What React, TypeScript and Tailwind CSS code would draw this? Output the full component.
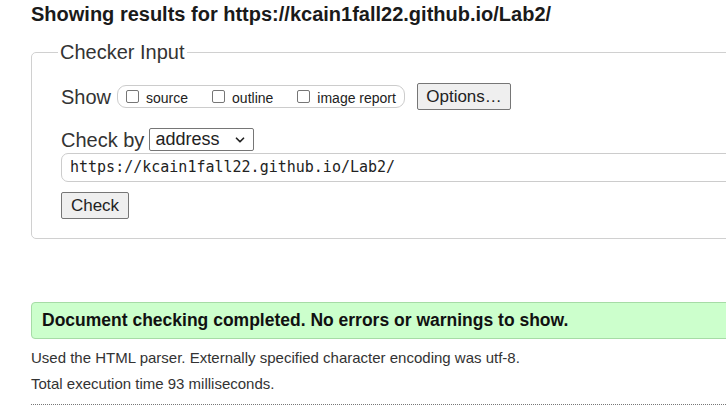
import { ChevronDown } from "lucide-react";

const sans = "font-['Arial','Liberation_Sans',sans-serif]";

function Box({ label }: { label: string }) {
  return (
    <label className="flex items-end leading-[16px]">
      <span className="mb-[3px] mr-[7px] inline-block h-[13px] w-[13px] rounded-[2px] border border-[#767676] bg-white" />
      <span className="text-[14px] text-[#222]">{label}</span>
    </label>
  );
}

export default function App() {
  return (
    <div className={`h-[405px] w-[726px] overflow-hidden bg-white text-[#222] ${sans}`}>
      <div className="w-[900px] pl-[31px]">
        <h2 className="pt-[2px] text-[20px] font-bold leading-[24px] text-[#1a1a1a]">
          Showing results for https://kcain1fall22.github.io/Lab2/
        </h2>
        <fieldset className="mt-[14px] h-[199px] rounded-[5px] border border-[#d0d0d0] px-[29px]">
          <legend className="-ml-[3px] px-[2px] text-[20px] leading-[24px] text-[#333]">Checker Input</legend>
          <div className="mt-[19px] flex h-[27px] items-center">
            <span className="mr-[6px] text-[20px] text-[#333]">Show</span>
            <div className="flex h-[23px] w-[288px] items-center gap-[24px] rounded-[9px] border border-[#ccc] pl-[8px] pt-[2px]">
              <Box label="source" />
              <Box label="outline" />
              <Box label="image report" />
            </div>
            <button className="ml-[12px] h-[27px] w-[94px] rounded-[2px] border border-[#767676] bg-[#efefef] text-[17px] text-[#222]">
              Options…
            </button>
          </div>
          <div className="mt-[18px] flex h-[23px] items-center">
            <span className="mr-[5px] text-[20px] text-[#333]">Check by</span>
            <div className="flex h-[23px] w-[105px] items-center justify-between rounded-[2px] border border-[#767676] pl-[5px] pr-[6px] text-[18px] text-[#222]">
              <span>address</span>
              <ChevronDown size={14} strokeWidth={3} />
            </div>
          </div>
          <div className="mt-[2px] flex h-[29px] w-[900px] items-center rounded-[7px] border border-[#ccc] pl-[8px] font-['DejaVu_Sans_Mono',monospace] text-[15px] text-[#222]">
            https://kcain1fall22.github.io/Lab2/
          </div>
          <button className="mt-[10px] h-[27px] w-[68px] rounded-[2px] border border-[#767676] bg-[#efefef] text-[17px] text-[#222]">
            Check
          </button>
        </fieldset>
        <div className="mt-[63px] flex h-[37px] w-[900px] items-center rounded-[4px] border border-[#a6dca6] bg-[#ccffcc] pl-[10px] text-[17.5px] font-bold text-[#111]">
          Document checking completed. No errors or warnings to show.
        </div>
        <p className="mt-[9px] text-[15px] leading-[20px] text-[#333]">
          Used the HTML parser. Externally specified character encoding was utf-8.
        </p>
        <p className="mt-[6px] text-[15px] leading-[20px] text-[#333]">Total execution time 93 milliseconds.</p>
        <div className="mt-[10px] border-t border-dotted border-[#777]" />
      </div>
    </div>
  );
}
